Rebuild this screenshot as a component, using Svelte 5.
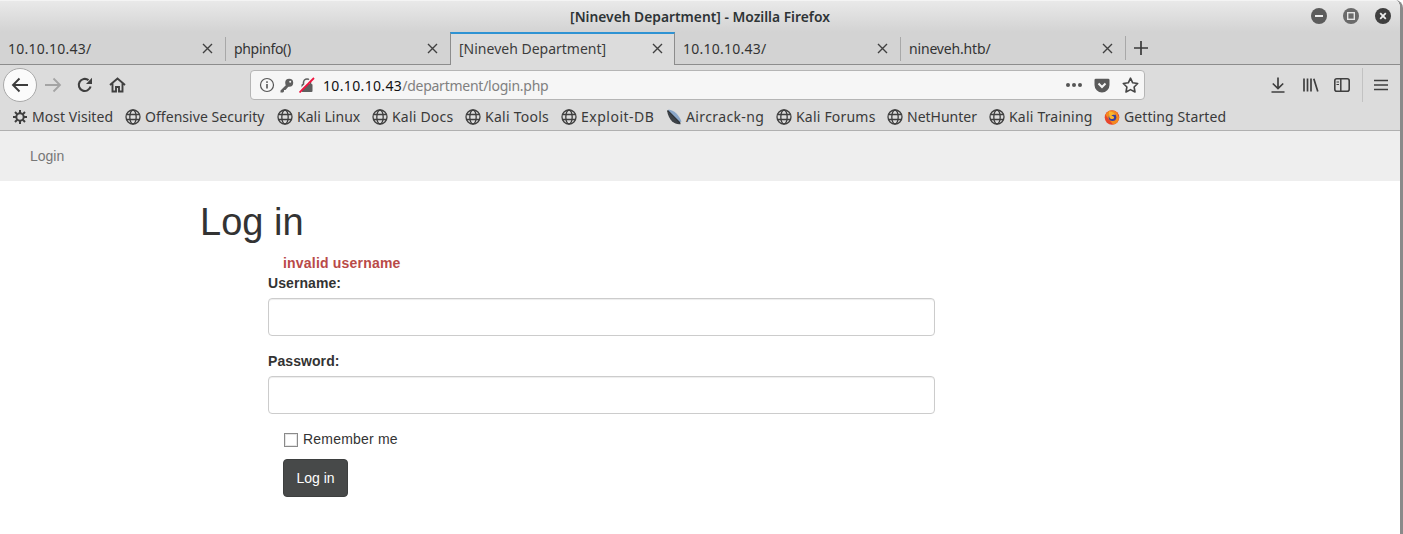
<script>
  // ls: small letter-spacing per label, the reference's UI font has other widths than Noto Sans
  const tabs = [
    { title: "10.10.10.43/", ls: 0.25 },
    { title: "phpinfo()", ls: -0.33 },
    { title: "[Nineveh Department]", ls: 0, active: true },
    { title: "10.10.10.43/", ls: 0.25 },
    { title: "nineveh.htb/", ls: -0.17 }
  ];
  const bookmarks = [
    { label: "Most Visited", icon: "gear", w: 112, ls: 0.05 },
    { label: "Offensive Security", icon: "globe", w: 152, ls: 0.05 },
    { label: "Kali Linux", icon: "globe", w: 95, ls: 0.02 },
    { label: "Kali Docs", icon: "globe", w: 93, ls: 0.2 },
    { label: "Kali Tools", icon: "globe", w: 96, ls: 0.25 },
    { label: "Exploit-DB", icon: "globe", w: 105, ls: 0.5 },
    { label: "Aircrack-ng", icon: "dish", w: 110, ls: 0.38 },
    { label: "Kali Forums", icon: "globe", w: 111, ls: 0.2 },
    { label: "NetHunter", icon: "globe", w: 102, ls: 0 },
    { label: "Kali Training", icon: "globe", w: 115, ls: 0.2 },
    { label: "Getting Started", icon: "firefox", w: 125, ls: 0.1 }
  ];
</script>

<div class="window">
  <header class="titlebar">
    <span class="title">[Nineveh Department] - Mozilla Firefox</span>
    <div class="wm">
      <svg width="16" height="16" viewBox="0 0 16 16"><circle cx="8" cy="8" r="8" fill="#5c5c5c"/><rect x="4" y="7" width="8" height="2" fill="#eee"/></svg>
      <svg width="16" height="16" viewBox="0 0 16 16"><circle cx="8" cy="8" r="8" fill="#6a6a6a"/><rect x="4.700" y="4.700" width="6.600" height="6.600" fill="none" stroke="#e4e4e4" stroke-width="1.400"/></svg>
      <svg width="16" height="16" viewBox="0 0 16 16"><circle cx="8" cy="8" r="8" fill="#3f3f3f"/><path d="M5.200 5.200l5.600 5.600M10.800 5.200l-5.600 5.600" stroke="#eee" stroke-width="1.800"/></svg>
    </div>
  </header>

  <div class="tabbar">
    {#each tabs as tab, i}
      <div class="tab" class:active={tab.active} class:sep={i > 0 && !tab.active && !tabs[i - 1].active}>
        <span class="tab-title" style="letter-spacing: {tab.ls}px">{tab.title}</span>
        <svg class="tab-x" width="11" height="11" viewBox="0 0 11 11"><path d="M1 1l9 9M10 1l-9 9" stroke="#404040" stroke-width="1.400"/></svg>
      </div>
    {/each}
    <div class="newtab">
      <svg width="14" height="14" viewBox="0 0 14 14"><path d="M7 0v14M0 7h14" stroke="#3a3a3a" stroke-width="1.700"/></svg>
    </div>
  </div>

  <div class="toolbar">
    <div class="back">
      <svg width="18" height="16" viewBox="0 0 18 16"><path d="M17 8H2M8.500 1.500L2 8l6.500 6.500" fill="none" stroke="#3c3c3c" stroke-width="1.900"/></svg>
    </div>
    <svg class="fwd" width="18" height="16" viewBox="0 0 18 16"><path d="M1 8h15M9.500 1.500L16 8l-6.500 6.500" fill="none" stroke="#a4a4a4" stroke-width="1.800"/></svg>
    <svg class="reload" width="16" height="16" viewBox="0 0 16 16"><path d="M13.600 9.500A6 6 0 1 1 11.500 3.200" fill="none" stroke="#3f3f3f" stroke-width="2.100"/><path d="M15 0.800V7H9z" fill="#3f3f3f"/></svg>
    <svg class="home" width="17" height="16" viewBox="0 0 17 16"><path d="M1 8l7.500-6.500L16 8M3.500 6.500V14.500H7V10h3v4.500h3.500V6.500" fill="none" stroke="#3f3f3f" stroke-width="1.900"/></svg>

    <div class="urlbar">
      <svg class="u-info" width="16" height="16" viewBox="0 0 16 16"><circle cx="8" cy="8" r="6.500" fill="none" stroke="#555" stroke-width="1.200"/><rect x="7.200" y="7" width="1.600" height="4.500" fill="#555"/><rect x="7.200" y="4.300" width="1.600" height="1.600" fill="#555"/></svg>
      <svg class="u-key" width="15" height="15" viewBox="0 0 15 15"><circle cx="10.200" cy="4.800" r="4" fill="#5f5f5f"/><path d="M8 6L1.500 12.500V14.500H4L5 13.500V12H6.500L10 8z" fill="#5f5f5f"/><circle cx="11.200" cy="3.800" r="1" fill="#f6f6f6"/></svg>
      <svg class="u-lock" width="16" height="16" viewBox="0 0 16 16"><path d="M4.500 7V5.500a3.500 3.500 0 0 1 7 0V7" fill="none" stroke="#5f5f5f" stroke-width="1.600"/><rect x="2.500" y="7" width="11" height="8" rx="1" fill="#5f5f5f"/><path d="M1.500 12.500L12.500 1.500" stroke="#f6f6f6" stroke-width="2"/><path d="M0.500 15.500L15 1" stroke="#f0143f" stroke-width="1.800"/></svg>
      <span class="url"><span class="host">10.10.10.43</span><span class="path">/department/login.php</span></span>
      <span class="dots"><i></i><i></i><i></i></span>
      <svg class="u-pocket" width="16" height="15" viewBox="0 0 16 15"><path d="M1.800 0.800h12.400a1.300 1.300 0 0 1 1.300 1.300V7A7.500 7.500 0 0 1 0.500 7V2.100a1.300 1.300 0 0 1 1.300-1.300z" fill="#5a5a5a"/><path d="M4.500 5.500L8 9l3.500-3.500" fill="none" stroke="#f6f6f6" stroke-width="2"/></svg>
      <svg class="u-star" width="17" height="16" viewBox="0 0 17 16"><path d="M8.500 1.200l2.200 4.600 5 .7-3.600 3.500.9 5-4.500-2.400-4.500 2.400.9-5L1.300 6.500l5-.7z" fill="none" stroke="#454545" stroke-width="1.600" stroke-linejoin="round"/></svg>
    </div>

    <div class="tools">
      <svg class="t-dl" width="14" height="16" viewBox="0 0 14 16"><path d="M7 0.500V11M1.800 6.500L7 11.500l5.200-5M0.500 15h13" fill="none" stroke="#3f3f3f" stroke-width="1.700"/></svg>
      <svg class="t-lib" width="16" height="14" viewBox="0 0 16 14"><path d="M1 0.500v13M4.500 0.500v13M8 0.500v13M10.800 0.700l4 12.800" fill="none" stroke="#3f3f3f" stroke-width="1.700"/></svg>
      <svg class="t-side" width="16" height="14" viewBox="0 0 16 14"><rect x="0.800" y="0.800" width="14.400" height="12.400" rx="2" fill="none" stroke="#3f3f3f" stroke-width="1.600"/><path d="M6.800 1v12" stroke="#3f3f3f" stroke-width="1.500"/><path d="M2.500 4h2.500M2.500 6.500h2.500" stroke="#3f3f3f" stroke-width="1.100"/></svg>
      <span class="t-sep"></span>
      <svg class="t-menu" width="14" height="12" viewBox="0 0 14 12"><path d="M0 1.500h14M0 6h14M0 10.500h14" stroke="#3f3f3f" stroke-width="1.700"/></svg>
    </div>
  </div>

  <div class="bookmarks">
    {#each bookmarks as b}
      <div class="bm" style="width: {b.w}px">
        {#if b.icon === "gear"}
          <svg class="gear" width="14" height="14" viewBox="0 0 14 14"><circle cx="7" cy="7" r="3.700" fill="none" stroke="#3f3f3f" stroke-width="2"/><path d="M7 0v3M7 11v3M0 7h3M11 7h3M2 2l2.200 2.200M9.800 9.800L12 12M12 2L9.800 4.200M4.200 9.800L2 12" stroke="#3f3f3f" stroke-width="2"/></svg>
        {:else if b.icon === "globe"}
          <svg width="16" height="16" viewBox="0 0 16 16"><g fill="none" stroke="#3f3f3f" stroke-width="1.300"><circle cx="8" cy="8" r="7"/><ellipse cx="8" cy="8" rx="3.200" ry="7"/><path d="M1.500 5.500h13M1.500 10.500h13"/></g></svg>
        {:else if b.icon === "dish"}
          <svg width="16" height="16" viewBox="0 0 16 16"><path d="M1 1.500L15 15C10 16 3 13 1 1.500z" fill="#3d4247"/><path d="M2.500 0.500C8 1 13 6 15.500 12.500L13 13.500L2 2.500z" fill="#8aa6c8"/><path d="M1.500 1.500L14 14" stroke="#2d3237" stroke-width="1.500"/></svg>
        {:else}
          <svg width="16" height="16" viewBox="0 0 16 16"><circle cx="8" cy="8.500" r="7.300" fill="#e8452c"/><path d="M1.500 6A7 7 0 0 1 13 3.500L15 8.500A7 7 0 0 1 9 15.500z" fill="#f58a1f"/><circle cx="8.500" cy="8.300" r="3.800" fill="#3b3f9e"/><path d="M5 2.500c2 0 5 .5 6.500 3.500-1.500-.5-3.500-.2-4 .8 1.800 0 3 1 2.500 2.500-1 1.300-3.500 1-4.500-.8C5 7 5 5 5 2.500z" fill="#fbb62c"/></svg>
        {/if}
        <span style="letter-spacing: {b.ls}px">{b.label}</span>
      </div>
    {/each}
  </div>

  <nav class="navbar"><a href="#login">Login</a></nav>

  <main class="content">
    <h1>Log in</h1>
    <form class="login" on:submit|preventDefault>
      <p class="error">invalid username</p>
      <div class="group">
        <label for="username">Username:</label>
        <input id="username" type="text" />
      </div>
      <div class="group">
        <label for="password">Password:</label>
        <input id="password" type="password" />
      </div>
      <label class="remember"><input type="checkbox" /> <span>Remember me</span></label>
      <button type="submit">Log in</button>
    </form>
  </main>
</div>

<style>
  :global(body) {
    margin: 0;
    background: #fff;
  }

  .window {
    box-sizing: border-box;
    width: 1403px;
    height: 534px;
    overflow: hidden;
    border-right: 3px solid #8a8a8a;
    border-top-right-radius: 8px;
    background: #fff;
    font-family: "Liberation Sans", Arial, sans-serif;
    color: #333;
  }

  .titlebar {
    display: flex;
    align-items: center;
    justify-content: center;
    position: relative;
    height: 32px;
    background: linear-gradient(#e9e9e9, #d3d3d3);
    border-top: 1px solid #f4f4f4;
    box-sizing: border-box;
    font-family: "Noto Sans", sans-serif;
  }

  .title {
    font-size: 13.800px;
    font-weight: 600;
    color: #2e3436;
  }

  .wm {
    position: absolute;
    right: 9px;
    top: 7px;
    display: flex;
    gap: 16px;
  }

  .tabbar {
    display: flex;
    box-sizing: border-box;
    height: 33px;
    background: #d3d3d3;
    border-bottom: 1px solid #8c8c8c;
    font-family: "Noto Sans", sans-serif;
    font-size: 14px;
    color: #333;
  }

  .tab {
    display: flex;
    align-items: center;
    justify-content: space-between;
    box-sizing: border-box;
    width: 225px;
    padding: 0 12px 0 9px;
    position: relative;
  }

  .tab:first-child {
    padding-left: 8px;
  }

  .tab.sep::before {
    content: "";
    position: absolute;
    left: 0;
    top: 5px;
    bottom: 3px;
    width: 1px;
    background: #a8a8a8;
  }

  .tab.active {
    background: #dcdcdc;
    border-top: 2px solid #2f93d3;
    border-left: 1px solid #8c8c8c;
    border-right: 1px solid #8c8c8c;
    height: 33px;
    padding: 0 11px 2px 8px;
    color: #3c3c3c;
  }

  .tab.active + .tab {
    padding-left: 8px;
  }

  .tab-title {
    white-space: nowrap;
  }

  .newtab {
    display: flex;
    align-items: center;
    box-sizing: border-box;
    padding-left: 8px;
    height: 24px;
    margin-top: 4px;
    border-left: 1px solid #a8a8a8;
  }

  .toolbar {
    display: flex;
    align-items: center;
    box-sizing: border-box;
    height: 40px;
    background: #dcdcdc;
    padding-left: 3px;
  }

  .back {
    display: flex;
    align-items: center;
    justify-content: center;
    box-sizing: border-box;
    width: 34px;
    height: 34px;
    border-radius: 50%;
    background: #fbfbfb;
    border: 1px solid #a9a9a9;
  }

  .fwd {
    margin-left: 7px;
  }

  .reload {
    margin-left: 15px;
  }

  .home {
    margin-left: 16px;
  }

  .urlbar {
    display: flex;
    align-items: center;
    box-sizing: border-box;
    width: 895px;
    height: 30px;
    margin-left: 124px;
    padding-left: 8px;
    background: #f6f6f6;
    border: 1px solid #b5b5b5;
    border-radius: 4px;
  }

  .u-key {
    margin-left: 4px;
  }

  .u-lock {
    margin-left: 5px;
  }

  .url {
    margin-left: 8px;
    font-family: "Noto Sans", sans-serif;
    font-size: 14px;
    white-space: nowrap;
  }

  .host {
    color: #111;
    letter-spacing: 0.35px;
  }

  .path {
    color: #808080;
    letter-spacing: -0.25px;
  }

  .dots {
    display: flex;
    gap: 2px;
    margin-left: auto;
  }

  .dots i {
    width: 4px;
    height: 4px;
    border-radius: 50%;
    background: #555;
  }

  .u-pocket {
    margin-left: 12px;
  }

  .u-star {
    margin-left: 12px;
    margin-right: 5px;
  }

  .tools {
    display: flex;
    align-items: center;
    margin-left: 126px;
  }

  .t-lib {
    margin-left: 18px;
  }

  .t-side {
    margin-left: 15px;
  }

  .t-sep {
    width: 1px;
    height: 34px;
    margin-left: 12px;
    background: #c2c2c2;
  }

  .t-menu {
    margin-left: 11px;
  }

  .bookmarks {
    display: flex;
    align-items: center;
    box-sizing: border-box;
    height: 26px;
    padding: 0 0 2px 13px;
    background: #dcdcdc;
    border-bottom: 1px solid #b0b0b0;
    font-family: "Noto Sans", sans-serif;
    font-size: 14px;
    color: #3a3a3a;
  }

  .bm {
    display: flex;
    align-items: center;
    gap: 4px;
    flex: none;
    white-space: nowrap;
  }

  .bm svg {
    flex: none;
  }

  .gear {
    margin-right: 1px;
  }

  .navbar {
    box-sizing: border-box;
    height: 50px;
    padding: 15px 30px;
    background: #eee;
    font-size: 14px;
    line-height: 20px;
  }

  .navbar a {
    color: #777;
    text-decoration: none;
  }

  .content {
    padding-left: 200px;
  }

  h1 {
    margin: 21px 0 0;
    font-size: 38px;
    font-weight: 500;
    line-height: 40px;
    color: #333;
  }

  .login {
    width: 667px;
    margin-left: 68px;
    font-size: 14px;
    line-height: 20px;
  }

  .error {
    margin: 11px 0 0;
    padding-left: 15px;
    font-weight: 700;
    letter-spacing: 0.2px;
    color: #b94a48;
  }

  .group {
    margin-bottom: 15px;
  }

  .group label {
    display: block;
    margin-bottom: 5px;
    font-weight: 700;
    letter-spacing: 0.08px;
  }

  .group input {
    display: block;
    box-sizing: border-box;
    width: 100%;
    height: 38px;
    background: #fff;
    border: 1px solid #ccc;
    border-radius: 4px;
    box-shadow: inset 0 1px 1px rgba(0, 0, 0, 0.075);
  }

  .remember {
    display: flex;
    align-items: center;
    padding-left: 16px;
    margin-top: 5px;
    letter-spacing: 0.2px;
  }

  .remember input {
    appearance: none;
    box-sizing: border-box;
    width: 14px;
    height: 14px;
    margin: 2px 5px 0 0;
    background: #fff;
    border: 1px solid #8a8a8a;
    box-shadow: inset 0 0 0 1px #e6e6e6;
  }

  button {
    display: block;
    box-sizing: border-box;
    width: 65px;
    height: 38px;
    margin: 10px 0 0 15px;
    background: #474949;
    border: 1px solid #3d3f3f;
    border-radius: 4px;
    color: #fff;
    font: inherit;
  }
</style>
